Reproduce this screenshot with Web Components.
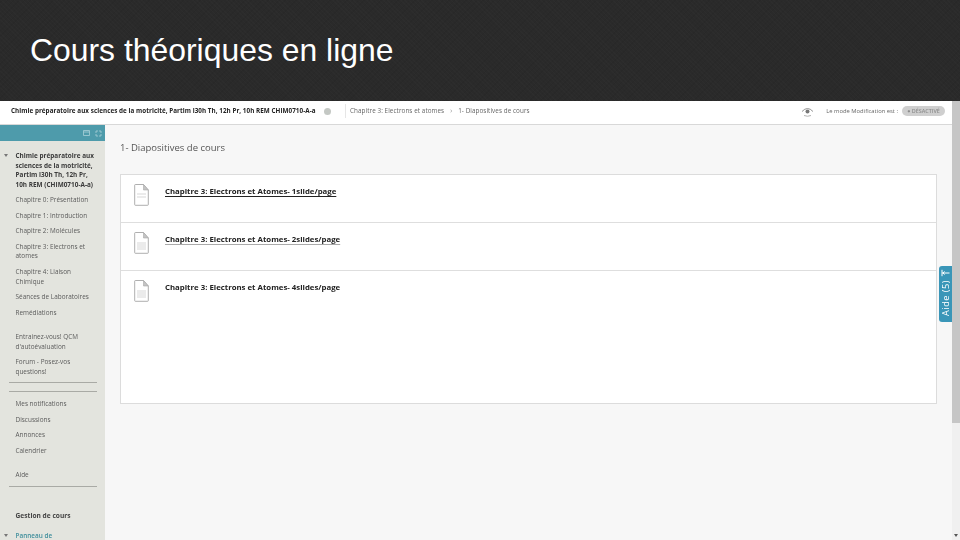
<!DOCTYPE html>
<html lang="fr"><head><meta charset="utf-8"><style>
html,body{margin:0;padding:0;width:960px;height:540px;overflow:hidden;background:#f7f7f7}
</style></head><body>
<slide-page>
  <slide-header>Cours théoriques en ligne</slide-header>
  <course-app>
    <top-bar></top-bar>
    <side-nav slot="side">
      <nav-item kind="root">Chimie préparatoire aux sciences de la motricité, Partim l30h Th, 12h Pr, 10h REM (CHIM0710-A-a)</nav-item>
      <nav-item>Chapitre 0: Présentation</nav-item>
      <nav-item>Chapitre 1: Introduction</nav-item>
      <nav-item>Chapitre 2: Molécules</nav-item>
      <nav-item>Chapitre 3: Electrons et atomes</nav-item>
      <nav-item>Chapitre 4: Liaison Chimique</nav-item>
      <nav-item>Séances de Laboratoires</nav-item>
      <nav-item>Remédiations</nav-item>
      <nav-item gap="15">Entrainez-vous! QCM d'autoévaluation</nav-item>
      <nav-item>Forum - Posez-vos questions!</nav-item>
      <nav-rule top="5"></nav-rule>
      <nav-rule top="8"></nav-rule>
      <nav-item gap="7.5">Mes notifications</nav-item>
      <nav-item>Discussions</nav-item>
      <nav-item>Annonces</nav-item>
      <nav-item>Calendrier</nav-item>
      <nav-item gap="14.5">Aide</nav-item>
      <nav-rule top="6.5"></nav-rule>
      <nav-item kind="head" gap="23.5">Gestion de cours</nav-item>
      <nav-item kind="panel" gap="11">Panneau de</nav-item>
    </side-nav>
    <course-main>
      <doc-row underline="1" lines="2">Chapitre 3: Electrons et Atomes- 1slide/page</doc-row>
      <doc-row underline="2" lines="4">Chapitre 3: Electrons et Atomes- 2slides/page</doc-row>
      <doc-row last lines="4">Chapitre 3: Electrons et Atomes- 4slides/page</doc-row>
    </course-main>
  </course-app>
</slide-page>
<script>
function def(name, css, html, init){
  customElements.define(name, class extends HTMLElement{
    connectedCallback(){
      if(this.shadowRoot) return;
      const r=this.attachShadow({mode:'open'});
      r.innerHTML='<style>'+css+'</style>'+(typeof html==='function'?html(this):html);
      if(init) init(this,r);
    }
  });
}
const F='"Open Sans","Noto Sans",sans-serif';
def('slide-page',':host{display:flex;flex-direction:column;width:960px;height:540px;overflow:hidden}','<slot></slot>');
def('slide-header',`:host{display:flex;align-items:center;box-sizing:border-box;height:101px;padding:0 0 0 30px;
  background-color:#2a2a2a;background-image:repeating-linear-gradient(45deg,rgba(255,255,255,.012) 0 1px,transparent 1px 3px),repeating-linear-gradient(-45deg,rgba(0,0,0,.05) 0 1px,transparent 1px 4px);
  color:#fff;font:31.9px "Liberation Sans",Arial,sans-serif;flex:none}`,'<slot></slot>');
def('course-app',`:host{display:grid;grid-template-columns:105px 1fr 8px;grid-template-rows:24px 1fr;flex:1;min-height:0;position:relative;filter:blur(.5px);background:#f7f7f7}
  .bar{grid-column:1/3}
  .side{grid-row:2;overflow:hidden;min-height:0}
  .main{grid-row:2;min-height:0}
  .scroll{grid-column:3;grid-row:1/3;background:#f0f0f0;display:flex;flex-direction:column;align-items:center;justify-content:space-between}
  .thumb{width:100%;height:322px;background:#c6c6c6}
  .arrow{width:0;height:0;border:2px solid transparent;border-top:3px solid #555;border-bottom:0;margin-bottom:3px}
  .help{position:absolute;left:939px;top:165px;width:13px;height:56px;box-sizing:border-box;background:#3a96b8;border-radius:3px 0 0 3px;color:#fff;
    display:flex;flex-direction:column;align-items:center;justify-content:flex-start;padding-top:3px;gap:3px;font:9.2px "Open Sans",sans-serif}
  .help span{writing-mode:vertical-rl;transform:rotate(180deg);white-space:nowrap;letter-spacing:.5px;line-height:13px}`,
 `<div class="bar"><slot name="bar"></slot></div><div class="side"><slot name="side"></slot></div><div class="main"><slot name="main"></slot></div>
  <div class="scroll"><div class="thumb"></div><div class="arrow"></div></div>
  <div class="help"><svg width="9" height="8" viewBox="0 0 9 8"><path d="M1 .8v6.4M1 4h7.5M3.5 2.4L2 4l1.5 1.6" fill="none" stroke="#fff" stroke-width="1"/></svg><span>Aide (5)</span></div>`,
 (el)=>{ [...el.children].forEach(c=>{ if(c.tagName==='TOP-BAR')c.slot='bar'; if(c.tagName==='COURSE-MAIN')c.slot='main'; }); });
def('top-bar',`:host{display:flex;align-items:center;height:24px;box-sizing:border-box;background:#fff;border-bottom:1px solid #d8d8d8;font:6.3px/10px ${F};color:#666;padding:0 7px 3px 11px;white-space:nowrap}
  b{color:#222;font-weight:700;width:305px;letter-spacing:.05px;overflow:hidden}
  .dot{width:7px;height:7px;border-radius:50%;background:#c4c8c4;margin-left:8px}
  .sep{width:1px;height:14px;background:#e6e6e6;margin:0 4px 0 14px}
  .crumb{flex:1;letter-spacing:.08px}
  .crumb i{font-style:normal;margin:0 6px;color:#888}
  svg{margin-right:12px}
  .mode{font-size:5.85px}
  .pill{margin-left:4px;width:43px;height:10px;line-height:10px;text-align:center;border-radius:5px;background:#cfcfcf;color:#8d8d8d;font-size:5.4px;font-weight:600}`,
 `<b>Chimie préparatoire aux sciences de la motricité, Partim l30h Th, 12h Pr, 10h REM CHIM0710-A-a</b><span class="dot"></span><span class="sep"></span>
  <span class="crumb">Chapitre 3: Electrons et atomes<i>›</i>1- Diapositives de cours</span>
  <svg width="13" height="11" viewBox="0 0 13 11"><path d="M1 5.5Q6.5-.5 12 5.5" fill="none" stroke="#888" stroke-width=".9"/><path d="M3 9.5Q6.5 11 10 9.5" fill="none" stroke="#aaa" stroke-width=".9"/><circle cx="6.5" cy="5.5" r="2" fill="#777"/></svg>
  <span class="mode">Le mode Modification est :</span><span class="pill">● DÉSACTIVÉ</span>`);
def('side-nav',`:host{display:block;box-sizing:border-box;height:415px;background:#e3e4de;overflow:hidden;position:relative}
  .head{height:16px;background:#4e9bab;display:flex;justify-content:flex-end;align-items:center;gap:5px;padding-right:3px;margin-bottom:10px}
  .head svg{display:block}`,
 `<div class="head"><svg width="7" height="6" viewBox="0 0 7 6"><path d="M.5.5h6v5h-6zM.5 2h6" fill="none" stroke="#a9d0d8" stroke-width=".8"/></svg><svg width="7" height="7" viewBox="0 0 7 7"><path d="M1 3V1h2M4 1h2v2M6 4v2H4M3 6H1V4" fill="none" stroke="#a9d0d8" stroke-width=".8"/></svg></div><slot></slot>`);
def('nav-item',`:host{display:block;position:relative;padding:0 12px 0 15.5px;margin-top:5.8px;font:6.4px/9.7px ${F};color:#5a5a5a;letter-spacing:.02px}
  :host([kind=root]){font-weight:700;color:#3a3a3a;margin-top:0;padding-right:5px;margin-bottom:-.5px}
  :host([kind=head]){font-weight:700;font-size:6.6px;color:#444}
  :host([kind=panel]){color:#3f8e9c;font-weight:600}
  .caret{display:none;position:absolute;left:4px;top:3px;width:0;height:0;border:2px solid transparent;border-top:3px solid #777;border-bottom:0}
  :host([kind=root]) .caret,:host([kind=panel]) .caret{display:block}`,
 `<span class="caret"></span><slot></slot>`,
 (el)=>{ if(el.hasAttribute('gap')) el.style.marginTop=el.getAttribute('gap')+'px'; });
def('nav-rule',`:host{display:block;height:1px;background:#a9aaa5;margin:0 8px 0 8.5px}`,'',
 (el)=>{ el.style.marginTop=el.getAttribute('top')+'px'; });
def('course-main',`:host{display:block;box-sizing:border-box;height:415px;padding:0 15px 0 15px;color:#333}
  h1{margin:0;padding:16px 0 0;height:49px;box-sizing:border-box;font:400 9.5px/14px ${F};color:#555}
  .card{background:#fff;border:1px solid #dcdcdc;height:230px;box-sizing:border-box}`,
 `<h1>1- Diapositives de cours</h1><div class="card"><slot></slot></div>`);
def('doc-row',`:host{display:flex;box-sizing:border-box;height:48px;padding:9px 0 0 13px;border-bottom:1px solid #dedede;gap:16px;font:700 7.8px/14px ${F};color:#222}
  :host([last]){border-bottom:0}
  svg{flex:none}
  a{color:inherit;text-decoration:none}
  :host([underline="1"]) a{text-decoration:underline;text-decoration-thickness:.7px;text-underline-offset:1.5px}
  :host([underline="2"]) a{text-decoration:underline;text-decoration-color:#aaa;text-decoration-thickness:.5px;text-underline-offset:1.5px}`,
 (el)=>`<svg width="15" height="22" viewBox="0 0 15 22"><path d="M.7 1.2a.7.7 0 0 1 .7-.7H9.5L14.3 6v14.6a.7.7 0 0 1-.7.7H1.4a.7.7 0 0 1-.7-.7z" fill="#fff" stroke="#9a9a9a" stroke-width=".8"/><path d="M9.5.5V6h4.8z" fill="#c4c4c4" stroke="#aaa" stroke-width=".6"/><path d="${el.getAttribute('lines')==='2'?'M3 10h9M3 13h9':'M3 11h9M3 13h9M3 15h9M3 17h9'}" stroke="#bdbdbd" stroke-width=".6"/></svg><a href="#"><slot></slot></a>`);
</script>
</body></html>
